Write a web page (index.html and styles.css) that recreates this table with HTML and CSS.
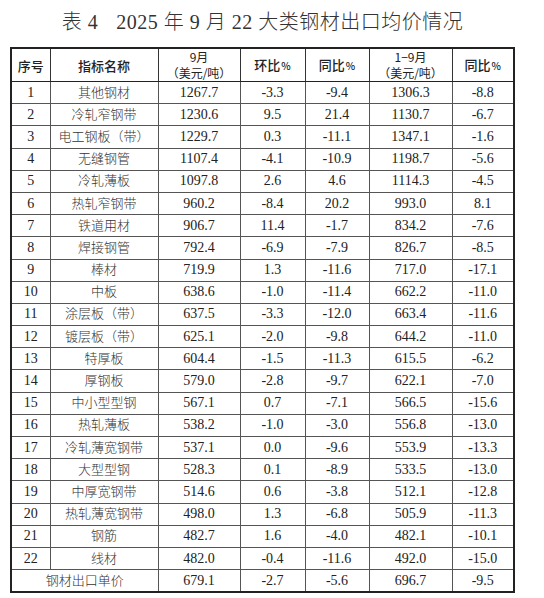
FILE: index.html
```html
<!DOCTYPE html>
<html lang="zh">
<head>
<meta charset="utf-8">
<link rel="stylesheet" href="styles.css">
</head>
<body>
<div class="page">
  <h1 class="title">表 4<span class="gap"></span>2025 年 9 月 22 大类钢材出口均价情况</h1>
  <table class="data">
    <colgroup>
      <col class="c1"><col class="c2"><col class="c3"><col class="c4"><col class="c5"><col class="c6"><col class="c7">
    </colgroup>
    <thead>
      <tr>
        <th>序号</th>
        <th>指标名称</th>
        <th class="two">9月<br>（美元/吨）</th>
        <th>环比<span class="pct">%</span></th>
        <th>同比<span class="pct">%</span></th>
        <th class="two">1−9月<br>（美元/吨）</th>
        <th>同比<span class="pct">%</span></th>
      </tr>
    </thead>
    <tbody>
      <tr><td>1</td><td class="nm">其他钢材</td><td>1267.7</td><td>-3.3</td><td>-9.4</td><td>1306.3</td><td>-8.8</td></tr>
      <tr><td>2</td><td class="nm">冷轧窄钢带</td><td>1230.6</td><td>9.5</td><td>21.4</td><td>1130.7</td><td>-6.7</td></tr>
      <tr><td>3</td><td class="nm">电工钢板（带）</td><td>1229.7</td><td>0.3</td><td>-11.1</td><td>1347.1</td><td>-1.6</td></tr>
      <tr><td>4</td><td class="nm">无缝钢管</td><td>1107.4</td><td>-4.1</td><td>-10.9</td><td>1198.7</td><td>-5.6</td></tr>
      <tr><td>5</td><td class="nm">冷轧薄板</td><td>1097.8</td><td>2.6</td><td>4.6</td><td>1114.3</td><td>-4.5</td></tr>
      <tr><td>6</td><td class="nm">热轧窄钢带</td><td>960.2</td><td>-8.4</td><td>20.2</td><td>993.0</td><td>8.1</td></tr>
      <tr><td>7</td><td class="nm">铁道用材</td><td>906.7</td><td>11.4</td><td>-1.7</td><td>834.2</td><td>-7.6</td></tr>
      <tr><td>8</td><td class="nm">焊接钢管</td><td>792.4</td><td>-6.9</td><td>-7.9</td><td>826.7</td><td>-8.5</td></tr>
      <tr><td>9</td><td class="nm">棒材</td><td>719.9</td><td>1.3</td><td>-11.6</td><td>717.0</td><td>-17.1</td></tr>
      <tr><td>10</td><td class="nm">中板</td><td>638.6</td><td>-1.0</td><td>-11.4</td><td>662.2</td><td>-11.0</td></tr>
      <tr><td>11</td><td class="nm">涂层板（带）</td><td>637.5</td><td>-3.3</td><td>-12.0</td><td>663.4</td><td>-11.6</td></tr>
      <tr><td>12</td><td class="nm">镀层板（带）</td><td>625.1</td><td>-2.0</td><td>-9.8</td><td>644.2</td><td>-11.0</td></tr>
      <tr><td>13</td><td class="nm">特厚板</td><td>604.4</td><td>-1.5</td><td>-11.3</td><td>615.5</td><td>-6.2</td></tr>
      <tr><td>14</td><td class="nm">厚钢板</td><td>579.0</td><td>-2.8</td><td>-9.7</td><td>622.1</td><td>-7.0</td></tr>
      <tr><td>15</td><td class="nm">中小型型钢</td><td>567.1</td><td>0.7</td><td>-7.1</td><td>566.5</td><td>-15.6</td></tr>
      <tr><td>16</td><td class="nm">热轧薄板</td><td>538.2</td><td>-1.0</td><td>-3.0</td><td>556.8</td><td>-13.0</td></tr>
      <tr><td>17</td><td class="nm">冷轧薄宽钢带</td><td>537.1</td><td>0.0</td><td>-9.6</td><td>553.9</td><td>-13.3</td></tr>
      <tr><td>18</td><td class="nm">大型型钢</td><td>528.3</td><td>0.1</td><td>-8.9</td><td>533.5</td><td>-13.0</td></tr>
      <tr><td>19</td><td class="nm">中厚宽钢带</td><td>514.6</td><td>0.6</td><td>-3.8</td><td>512.1</td><td>-12.8</td></tr>
      <tr><td>20</td><td class="nm">热轧薄宽钢带</td><td>498.0</td><td>1.3</td><td>-6.8</td><td>505.9</td><td>-11.3</td></tr>
      <tr><td>21</td><td class="nm">钢筋</td><td>482.7</td><td>1.6</td><td>-4.0</td><td>482.1</td><td>-10.1</td></tr>
      <tr><td>22</td><td class="nm">线材</td><td>482.0</td><td>-0.4</td><td>-11.6</td><td>492.0</td><td>-15.0</td></tr>
      <tr class="total"><td colspan="2" class="nm">钢材出口单价</td><td>679.1</td><td>-2.7</td><td>-5.6</td><td>696.7</td><td>-9.5</td></tr>
    </tbody>
  </table>
</div>
</body>
</html>
```

FILE: styles.css
```css
html, body {
  margin: 0;
  padding: 0;
  background: #ffffff;
}

.page {
  padding: 10px 0 0 10px;
  width: 503px;
  color: #1c1c1c;
  font-family: "Liberation Serif", "Noto Sans CJK SC", serif;
}

.title {
  margin: 0 0 13px 0;
  padding-left: 2px;
  text-align: center;
  font-size: 20px;
  font-weight: 300;
  line-height: 24px;
  letter-spacing: 0.5px;
  color: #333;
  font-family: "Liberation Serif", "Noto Sans CJK SC", serif;
}

.title .gap {
  display: inline-block;
  width: 18px;
}

.data {
  border-collapse: collapse;
  table-layout: fixed;
  width: 503px;
  border: 2px solid #222;
}

.c1 { width: 39px; }
.c2 { width: 108px; }
.c3 { width: 82px; }
.c4 { width: 65px; }
.c5 { width: 64px; }
.c6 { width: 83px; }
.c7 { width: 62px; }

.data th {
  height: 32px;
  padding: 0;
  border: 1px solid #333;
  border-bottom: 1.5px solid #222;
  font-family: "Noto Sans CJK SC", "Liberation Sans", sans-serif;
  font-weight: 500;
  font-size: 13px;
  line-height: 17px;
  text-align: center;
  color: #222;
}

.data th.two {
  font-size: 12px;
  line-height: 16px;
  font-weight: 400;
}

.data th .pct {
  font-size: 10px;
  margin-left: 1px;
}

.data td {
  height: 21.2px;
  padding: 0;
  border: 1px solid #555;
  text-align: center;
  font-family: "Liberation Serif", "Noto Sans CJK SC", serif;
  font-size: 14px;
  line-height: 16px;
  color: #222;
}

.data td.nm {
  font-size: 13px;
  font-weight: 300;
  color: #333;
}
```
